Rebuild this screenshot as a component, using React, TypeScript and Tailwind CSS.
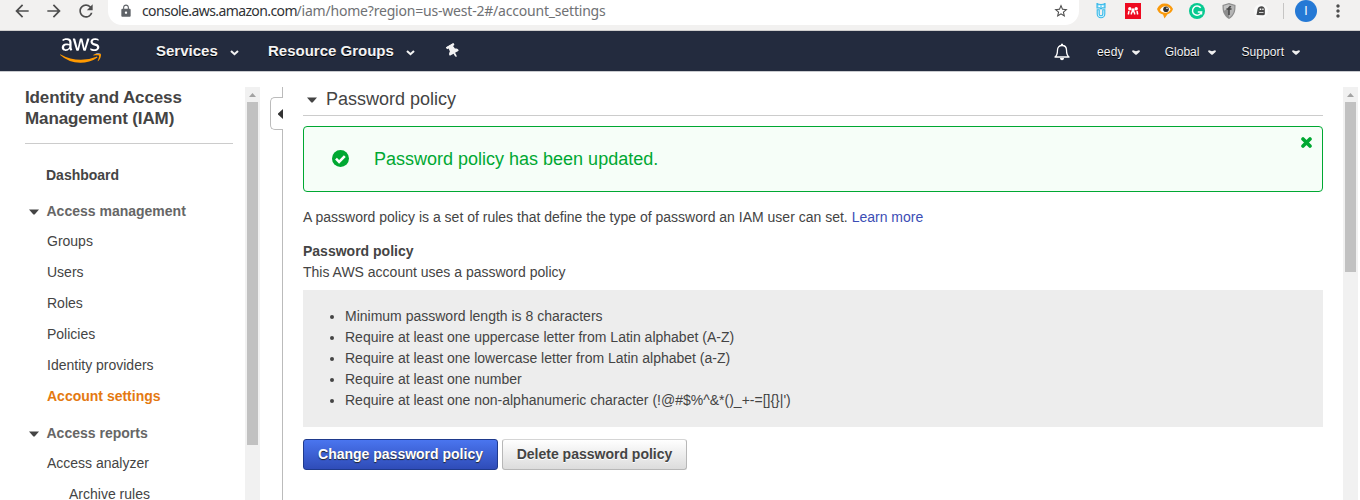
import React from 'react';
import { FaAws, FaThumbtack } from 'react-icons/fa';
import { MdArrowBack, MdArrowForward, MdRefresh, MdLock, MdStarBorder, MdMoreVert } from 'react-icons/md';

function Chevron({ className = '' }: { className?: string }) {
  return (
    <svg className={'shrink-0 ' + className} width="9" height="6" viewBox="0 0 9 6">
      <path d="M1 1l3.5 3.200L8 1" fill="none" stroke="#f3f3f3" strokeWidth="2.100" />
    </svg>
  );
}

function SmallChevron({ className = '' }: { className?: string }) {
  return (
    <svg className={'shrink-0 ' + className} width="8" height="5" viewBox="0 0 8 5">
      <path d="M.2.800L1 .2l3 1 3-1 .8.600v1L4.500 4.800h-1L.2 1.800z" fill="#f0f0f0" />
    </svg>
  );
}

function Caret({ className = '' }: { className?: string }) {
  return (
    <svg className={className} width="10" height="6" viewBox="0 0 10 6">
      <path d="M0 .5h10L5.6 5.4h-1.2z" fill="#444" />
    </svg>
  );
}

function Extensions() {
  return (
    <div className="flex items-center">
      <svg width="16" height="16" viewBox="0 0 16 16">
        <g fill="none" stroke="#35b9ea">
          <path d="M4.200 6.800V11a3.800 3.800 0 0 0 7.600 0V6.800H9.800V11a1.800 1.800 0 0 1-3.600 0V6.800z" fill="#d5f1fb" strokeWidth="1.100" />
          <path d="M4 .5c1.200.9 2.500 1 4 1s2.800-.1 4-1V5H9L8 6 7 5H4z" fill="#8fdaf5" strokeWidth="1.100" />
        </g>
        <path d="M5.500 2.500h1.500V4H5.500zM9 2.500h1.500V4H9z" fill="#fff" />
      </svg>
      <svg className="ml-4" width="16" height="16" viewBox="0 0 16 16">
        <path fill="#ee0a20" d="M0 0h16v16H0z" />
        <path d="M3.300 11.500l.7-3.500M12.700 11.500L12 8M6.300 11.500c0-2 .3-3 1.700-3s1.700 1 1.700 3" fill="none" stroke="#fff" strokeWidth="1.500" />
        <circle cx="4.800" cy="5.800" r="1.700" fill="#fff" />
        <circle cx="8" cy="7" r="1.700" fill="#fff" />
        <circle cx="11.200" cy="5.800" r="1.700" fill="#fff" />
      </svg>
      <svg className="ml-4" width="16" height="16" viewBox="0 0 16 16">
        <path d="M0 6C1.500 2.500 4 .5 7.500.5c4 0 7 2 8.500 5.500-1 2.800-3 4.600-5.500 5.300L7.500 15.500 6 11.500C3 11 1 9 0 6z" fill="#fa9a0c" />
        <path d="M3 7c1-2.500 3-3.800 5.500-3.800 2 0 4 1 5 3-1 2.300-2.800 3.500-5 3.500C6 9.700 4 8.800 3 7z" fill="#fff" />
        <circle cx="9" cy="6.200" r="2.800" fill="#333" />
        <circle cx="10" cy="5.300" r=".8" fill="#fff" />
      </svg>
      <svg className="ml-4" width="16" height="16" viewBox="0 0 16 16">
        <circle cx="8" cy="8" r="8" fill="#08c990" />
        <path d="M11.700 4.800A4.600 4.600 0 1 0 12.500 9H8.800M12.500 8.500v3" fill="none" stroke="#fff" strokeWidth="1.500" />
      </svg>
      <svg className="ml-4" width="16" height="16" viewBox="0 0 16 16">
        <path d="M8 0l6.500 2c.2 6-.8 10.500-6.500 14C2.300 12.500 1.300 8 1.500 2z" fill="#8d8d8d" />
        <path d="M8 1.200l5.300 1.600C13.500 8 12.500 11.500 8 14.700z" fill="#b5b5b5" />
        <path d="M8 1.200L2.700 2.800c0 2 0 3.200.5 5L8 5z" fill="#c4c4c4" />
        <path d="M5.500 6h5M8 4v8M8 5c0-1 1-1.500 2-1" fill="none" stroke="#444" strokeWidth="1.500" />
      </svg>
      <svg className="ml-4" width="16" height="16" viewBox="0 0 16 16">
        <circle cx="8" cy="8" r="7" fill="#fafafa" />
        <path d="M3.500 12l1-5.500C5 4 6.500 3.200 8.500 3.200c2 0 3.300 1.300 3.300 3.300v5l-1.500.8z" fill="#484848" />
        <path d="M6.700 5.500h1.600v1.500H6.700zM9.300 5.500h1.300v1.500H9.300zM6 9h4.500v.8H6z" fill="#fff" />
      </svg>
    </div>
  );
}

function BrowserBar() {
  return (
    <div className="flex h-[31px] shrink-0 items-start border-b border-[#cfcecd] bg-[#f2f1f0] text-[#4d4d4d]">
      <MdArrowBack className="mt-px ml-[12px] size-5" />
      <MdArrowForward className="mt-px ml-3 size-5" />
      <MdRefresh className="mt-px ml-3 size-5" />
      <div className="ml-3 flex h-[25px] w-[971px] items-start rounded-b-[14px] bg-white">
        <MdLock className="mt-[4px] ml-[11px] size-[14px] text-[#5f6368]" />
        <span className="ml-[9px] flex w-[463px] font-['Noto_Sans'] text-[14px] leading-[22px] whitespace-nowrap text-[#6f7174]">
          <span className="w-[154.500px] tracking-[-0.600px] text-[#303235]">console.aws.amazon.com</span>
          <span className="tracking-[-0.200px]">/iam/home?region=us-west-2#/account_settings</span>
        </span>
        <MdStarBorder className="mt-[3px] mr-[10px] ml-auto size-4" />
      </div>
      <div className="mt-[3px] ml-[14px]"><Extensions /></div>
      <div className="mt-[3px] ml-[14px] h-4 w-px bg-[#c6c5c4]" />
      <div className="ml-[11px] flex size-[22px] items-center justify-center rounded-full bg-[#2579d5] text-[12px] text-white">I</div>
      <MdMoreVert className="mt-[1px] ml-[11px] size-5" />
    </div>
  );
}

function NavBar() {
  return (
    <header className="flex h-[41px] shrink-0 items-center border-b border-[#c9cbcf] bg-[#232b3e] text-[#f3f3f3] [text-shadow:0_1px_0_#000]">
      <svg className="absolute" width="0" height="0">
        <linearGradient id="aws" x1="0" y1="0" x2="0" y2="1">
          <stop offset="0.63" stopColor="#fff" />
          <stop offset="0.63" stopColor="#ff9900" />
        </linearGradient>
      </svg>
      <div className="ml-[60px] w-[41px]">
        <FaAws className="-mt-px h-[33px] w-[41px] [&_path]:fill-[url(#aws)]" />
      </div>
      <span className="ml-[55px] w-[62px] text-[15px] font-bold">Services</span>
      <Chevron className="mt-[3px] ml-[12px]" />
      <span className="ml-[29px] w-[126px] text-[15px] font-bold whitespace-nowrap">Resource Groups</span>
      <Chevron className="mt-[3px] ml-[12px]" />
      <FaThumbtack className="ml-[31px] size-[14px] -rotate-[30deg]" />
      <svg className="mt-[2px] ml-auto" width="16" height="18" viewBox="0 0 16 18">
        <path d="M1 14c2-1.500 2.500-3 2.500-7 0-3 1.800-4.500 4.500-4.500s4.500 1.500 4.500 4.500c0 4 .5 5.500 2.500 7z" fill="none" stroke="#fff" strokeWidth="1.300" strokeLinejoin="round" />
        <path d="M6 15h4c0 3-4 3-4 0zM7 .8h2V3H7z" fill="#fff" />
      </svg>
      <div className="ml-[27px] flex w-[203px] items-center text-[12px]">
        <span className="mt-px w-[35px] tracking-[0.150px]">eedy</span>
        <SmallChevron className="mt-[2px]" />
        <span className="mt-px ml-[25px] w-[44px]">Global</span>
        <SmallChevron className="mt-[2px]" />
        <span className="mt-px ml-[25px] w-[51px] tracking-[0.100px]">Support</span>
        <SmallChevron className="mt-[2px]" />
      </div>
      <div className="w-[60px]" />
    </header>
  );
}

function Scrollbar({ thumb }: { thumb: string }) {
  return (
    <div className="flex w-[15px] shrink-0 flex-col items-center bg-[#f1f1f1]">
      <svg className="shrink-0" width="15" height="15" viewBox="0 0 15 15">
        <path d="M4 10h7L7.500 6z" fill="#a3a3a3" />
      </svg>
      <div className={'w-[11px] bg-[#c1c1c1] ' + thumb} />
    </div>
  );
}

const links = ['Groups', 'Users', 'Roles', 'Policies', 'Identity providers', 'Account settings'];

function Section({ title }: { title: string }) {
  return (
    <div className="flex h-[31px] items-center font-bold text-[#666]">
      <Caret className="ml-[4px]" />
      <span className="ml-[7.500px]">{title}</span>
    </div>
  );
}

function Sidebar() {
  return (
    <aside className="h-full w-[245px] shrink-0 overflow-hidden pr-3 pl-[25px]">
      <h1 className="text-[17px] leading-[21px] font-bold tracking-[-0.12px]">
        Identity and Access<br />Management (IAM)
      </h1>
      <div className="mt-[14px] border-b border-[#ccc]" />
      <div className="mt-4 flex h-[31px] items-center pl-[21px] font-bold">Dashboard</div>
      <div className="mt-[5px]"><Section title="Access management" /></div>
      <ul className="-mt-px">
        {links.map((l) => (
          <li key={l} className={'flex h-[31px] items-center pl-[22px] ' + (l === 'Account settings' ? 'font-bold text-[#e47911]' : '')}>{l}</li>
        ))}
      </ul>
      <div className="mt-[6px]"><Section title="Access reports" /></div>
      <div className="-mt-px flex h-[31px] items-center pl-[22px]">Access analyzer</div>
      <div className="flex h-[31px] items-center pl-[44px]">Archive rules</div>
    </aside>
  );
}

const rules = [
  'Minimum password length is 8 characters',
  'Require at least one uppercase letter from Latin alphabet (A-Z)',
  'Require at least one lowercase letter from Latin alphabet (a-Z)',
  'Require at least one number',
  "Require at least one non-alphanumeric character (!@#$%^&*()_+-=[]{}|')",
];

function Content() {
  return (
    <main className="ml-5 w-[1020px] shrink-0">
      <h2 className="flex h-[29px] items-center border-b border-[#ccc] pb-[4px] text-[18px]">
        <Caret className="mt-[2px] ml-[4px]" />
        <span className="ml-[9px]">Password policy</span>
      </h2>
      <div className="mt-[10px] flex h-[66px] items-center rounded-[4px] border border-[#00a832] bg-[#f6fef8] text-[#00a832]">
        <svg className="-mt-[2px] ml-[28px]" width="17" height="17" viewBox="0 0 17 17">
          <circle cx="8.500" cy="8.500" r="8.500" fill="#00a832" />
          <path d="M4 8.700l3.100 3.100 5.700-5.700" fill="none" stroke="#fff" strokeWidth="2.600" />
        </svg>
        <span className="ml-[25px] text-[18px]">Password policy has been updated.</span>
        <svg className="mt-[10px] mr-[10px] ml-auto self-start" width="11" height="11" viewBox="0 0 11 11">
          <path d="M2 2l7 7M9 2l-7 7" stroke="#00a832" strokeWidth="3.600" strokeLinecap="round" />
        </svg>
      </div>
      <p className="mt-[15px] leading-[21px]">
        A password policy is a set of rules that define the type of password an IAM user can set. <a className="text-[#3b4db5]">Learn more</a>
      </p>
      <h3 className="mt-[13px] leading-[21px] font-bold">Password policy</h3>
      <p className="leading-[21px]">This AWS account uses a password policy</p>
      <ul className="mt-[7px] h-[137px] list-disc bg-[#ededed] pt-[16px] pl-[42px] leading-[21px]">
        {rules.map((r) => <li key={r}>{r}</li>)}
      </ul>
      <div className="mt-[12px] flex gap-1 font-bold">
        <button className="h-[31px] w-[195px] rounded-[3px] border border-[#1f3a8c] bg-linear-to-b from-[#4a75ef] to-[#2f4cb8] text-white [text-shadow:0_1px_1px_#222]">Change password policy</button>
        <button className="h-[31px] w-[185px] rounded-[3px] border border-[#b7b7b7] border-t-[#d5d5d5] bg-linear-to-b from-white to-[#dcdcdc] [text-shadow:0_1px_0_#fff]">Delete password policy</button>
      </div>
    </main>
  );
}

export default function App() {
  return (
    <div className="flex h-[500px] w-[1360px] flex-col overflow-hidden bg-white font-['Liberation_Sans',Arial,sans-serif] text-[14px] text-[#444]">
      <BrowserBar />
      <NavBar />
      <div className="mt-[15px] flex min-h-0 flex-1">
        <Sidebar />
        <Scrollbar thumb="h-[343px]" />
        <div className="ml-[10px] flex w-[13px] flex-col items-end">
          <div className="h-[10px] w-px shrink-0 bg-[#bbb]" />
          <div className="flex h-[33px] w-[13px] shrink-0 items-center justify-end rounded-l-[5px] border border-r-0 border-[#bbb]">
            <svg width="5" height="10" viewBox="0 0 5 10"><path d="M5 0v10L0 5.500v-1z" fill="#333" /></svg>
          </div>
          <div className="w-px flex-1 bg-[#bbb]" />
        </div>
        <Content />
        <div className="ml-5 flex"><Scrollbar thumb="h-[170px]" /></div>
      </div>
    </div>
  );
}
